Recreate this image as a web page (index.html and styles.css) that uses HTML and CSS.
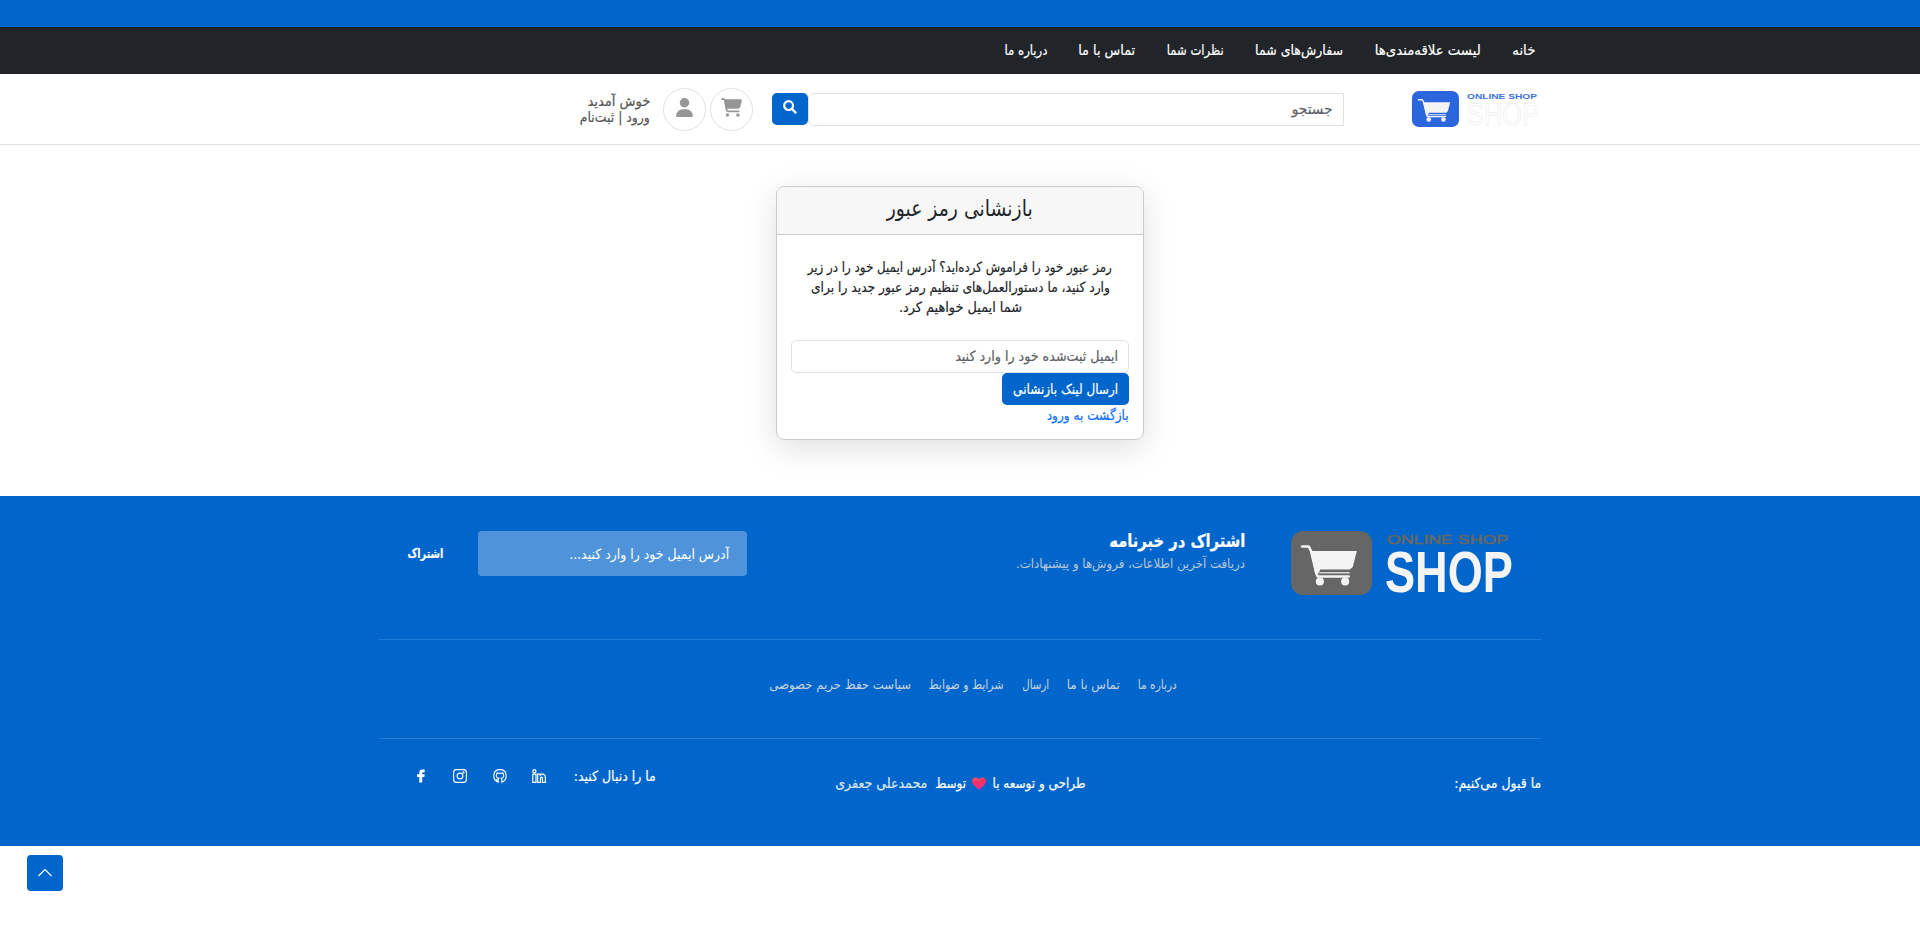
FILE: index.html
```html
<!DOCTYPE html>
<html lang="fa" dir="rtl">
<head>
<meta charset="utf-8">
<title>بازنشانی رمز عبور</title>
<link rel="stylesheet" href="styles.css">
</head>
<body>
<svg class="defs" width="0" height="0" aria-hidden="true">
  <symbol id="logo-cart" viewBox="0 0 80 64">
    <rect width="80" height="64" rx="12" fill="currentColor"/>
    <path d="M11 15.500h6.500l2.500 5 5 22 1.500 3H57" fill="none" stroke="#f4f4f4" stroke-width="2.600" stroke-linejoin="round" stroke-linecap="round"/>
    <path d="M19 20h46l-4 16-3 2.500H29l-2 4h-3z" fill="#f4f4f4"/>
    <path d="M28 41.800h30" stroke="#f4f4f4" stroke-width="1.200"/>
    <circle cx="28.500" cy="50.500" r="4" fill="#f4f4f4"/><circle cx="53.500" cy="50.500" r="4" fill="#f4f4f4"/>
  </symbol>
</svg>
<div class="topbar"></div>
<nav class="nav">
  <div class="container nav-list">
    <a class="fit" data-width="23">خانه</a>
    <a class="fit" data-width="106">لیست علاقه‌مندی‌ها</a>
    <a class="fit" data-width="88">سفارش‌های شما</a>
    <a class="fit" data-width="57">نظرات شما</a>
    <a class="fit" data-width="57">تماس با ما</a>
    <a class="fit" data-width="43">درباره ما</a>
  </div>
</nav>
<header class="header">
  <div class="logo" dir="ltr">
    <svg class="logo-mark" viewBox="0 0 80 64" preserveAspectRatio="none"><use href="#logo-cart"/></svg>
    <svg class="logo-words" viewBox="0 0 74 38">
      <text x="1" y="7.500" class="lw-top" textLength="70" lengthAdjust="spacingAndGlyphs">ONLINE SHOP</text>
      <text x="1" y="34" class="lw-main" textLength="72" lengthAdjust="spacingAndGlyphs">SHOP</text>
    </svg>
  </div>
  <div class="search">
    <div class="search-field"><span class="fit" data-width="41">جستجو</span></div>
    <button class="search-btn" aria-label="جستجو"><svg width="14" height="14" viewBox="0 0 14 14"><circle cx="5.600" cy="5.600" r="4.400" fill="none" stroke="#fff" stroke-width="2.200"/><path d="M9 9l3.600 3.600" stroke="#fff" stroke-width="2.400" stroke-linecap="round"/></svg></button>
  </div>
  <div class="circles">
    <a class="circle"><svg width="21" height="19" viewBox="0 0 576 512"><path fill="#969696" d="M0 24C0 10.700 10.700 0 24 0h45.500c22 0 41.500 12.800 50.600 32h411c26.300 0 45.500 25 38.600 50.400l-41 152.300c-8.500 31.400-37 53.300-69.500 53.300H170.700l5.400 28.500c2.200 11.300 12.100 19.500 23.600 19.500H488c13.300 0 24 10.700 24 24s-10.700 24-24 24H199.700c-34.600 0-64.300-24.600-70.700-58.500L77.400 54.500C76.700 50.700 73.400 48 69.500 48H24C10.700 48 0 37.300 0 24zm128 440a48 48 0 1 1 96 0 48 48 0 1 1-96 0zm336-48a48 48 0 1 1 0 96 48 48 0 1 1 0-96z"/></svg></a>
    <a class="circle"><svg width="17" height="19" viewBox="0 0 448 512"><path fill="#969696" d="M224 256a128 128 0 1 0 0-256 128 128 0 1 0 0 256zm-45.700 48C79.800 304 0 383.800 0 482.300 0 498.700 13.300 512 29.700 512h388.600c16.400 0 29.700-13.300 29.700-29.700C448 383.800 368.200 304 269.700 304z"/></svg></a>
  </div>
  <div class="welcome">
    <span class="fit" data-width="63">خوش آمدید</span>
    <span class="fit" data-width="70">ورود | ثبت‌نام</span>
  </div>
</header>
<main class="main">
  <section class="card">
    <h1 class="card-head"><span class="fit" data-width="146">بازنشانی رمز عبور</span></h1>
    <div class="card-body">
      <p class="lead">
        <span class="fit" data-width="304">رمز عبور خود را فراموش کرده‌اید؟ آدرس ایمیل خود را در زیر</span>
        <span class="fit" data-width="299">وارد کنید، ما دستورالعمل‌های تنظیم رمز عبور جدید را برای</span>
        <span class="fit" data-width="123">شما ایمیل خواهیم کرد.</span>
      </p>
      <div class="email"><span class="fit" data-width="163">ایمیل ثبت‌شده خود را وارد کنید</span></div>
      <button class="submit"><span class="fit" data-width="105">ارسال لینک بازنشانی</span></button>
      <a class="back"><span class="fit" data-width="82">بازگشت به ورود</span></a>
    </div>
  </section>
</main>
<footer class="footer">
  <div class="container newsletter">
    <div class="flogo" dir="ltr">
      <svg class="flogo-mark" viewBox="0 0 80 64" preserveAspectRatio="none"><use href="#logo-cart"/></svg>
      <svg class="flogo-words" viewBox="0 0 130 64">
        <text x="2" y="13" class="fw-top" textLength="121" lengthAdjust="spacingAndGlyphs">ONLINE SHOP</text>
        <text x="0" y="60.500" class="fw-main" textLength="128" lengthAdjust="spacingAndGlyphs">SHOP</text>
      </svg>
    </div>
    <div class="news-text">
      <h2><span class="fit" data-width="136">اشتراک در خبرنامه</span></h2>
      <p><span class="fit" data-width="229">دریافت آخرین اطلاعات، فروش‌ها و پیشنهادات.</span></p>
    </div>
    <div class="news-input"><span class="fit" data-width="160">آدرس ایمیل خود را وارد کنید...</span></div>
    <button class="news-btn"><span class="fit" data-width="36">اشتراک</span></button>
  </div>
  <div class="container links">
    <a class="fit" data-width="39">درباره ما</a>
    <a class="fit" data-width="53">تماس با ما</a>
    <a class="fit" data-width="27">ارسال</a>
    <a class="fit" data-width="75">شرایط و ضوابط</a>
    <a class="fit" data-width="142">سیاست حفظ حریم خصوصی</a>
  </div>
  <div class="container bottom">
    <span class="fit accept" data-width="87">ما قبول می‌کنیم:</span>
    <div class="credit">
      <span class="fit" data-width="93">طراحی و توسعه با</span>
      <svg width="14" height="13" viewBox="0 0 14 13"><defs><linearGradient id="heart" x1="0" y1="0" x2="0.300" y2="1"><stop offset="0" stop-color="#ff5a68"/><stop offset="0.500" stop-color="#f92f60"/><stop offset="1" stop-color="#f02a90"/></linearGradient></defs><path d="M7 12.500C4 10.500 0 7.500 0 4 0 .500 4.500-.800 7 2.300 9.500-.800 14 .500 14 4c0 3.500-4 6.500-7 8.500z" fill="url(#heart)"/></svg>
      <span class="fit by" data-width="31">توسط</span>
      <span class="fit name" data-width="92">محمدعلی جعفری</span>
    </div>
    <div class="follow">
      <span class="fit" data-width="82">ما را دنبال کنید:</span>
      <svg width="14" height="14" viewBox="0 0 14 14" fill="none" stroke="#fff" stroke-width="1.200"><circle cx="2.400" cy="2.200" r="1.600"/><path d="M.800 5.200h3.200v8.200H.800zM5.700 5.200h2.700v1c1.600-1.800 5-1 5 2.200v5h-2.900V9.400c0-1.700-2-1.700-2 0v4H5.700z"/></svg>
      <svg width="14" height="14" viewBox="0 0 14 14" fill="none" stroke="#fff" stroke-width="1.100"><path d="M5.200 13.200C-1 11 -.800.600 7 .600c7.800 0 8 10.400 1.800 12.600V10.600c0-.700-.300-1.100-.600-1.400 2.500-.200 3.200-2.700 1.900-4.200l-.100-1.300c-.800 0-1.300.500-1.600.700a6 6 0 0 0-2.800 0c-.300-.200-.800-.700-1.600-.700L3.900 5c-1.300 1.500-.600 4 1.900 4.200-.300.300-.600.700-.600 1.400zM5.200 11.500c-1.200.200-1.600-.800-2.200-1.200"/></svg>
      <svg width="14" height="14" viewBox="0 0 14 14" fill="none" stroke="#fff" stroke-width="1.100"><rect x=".600" y=".600" width="12.800" height="12.800" rx="2.800"/><circle cx="7" cy="7" r="2.900"/><circle cx="10.500" cy="3.400" r=".500" fill="#fff"/></svg>
      <svg width="14" height="14" viewBox="0 0 14 14"><path d="M5.300 13.500V8H3V5.300h2.300V3.600C5.300 1.500 6.500.500 8.300.500h2.400v2.700H9.200c-.700 0-1 .300-1 .900v1.200h2.500L10.300 8H8.200v5.500z" fill="#fff"/></svg>
    </div>
  </div>
</footer>
<button class="to-top" aria-label="بالا"><svg width="16" height="16" viewBox="0 0 16 16"><path d="M1.500 11L8 4.500l6.500 6.500" fill="none" stroke="#fff" stroke-width="1.100"/></svg></button>
<script src="fit.js"></script>
</body>
</html>
```
FILE: styles.css
```css
* { box-sizing: border-box; }
body { margin: 0; background: #fff; color: #212529; font: 14px/20px "DejaVu Sans", sans-serif; }
h1, h2, p { margin: 0; font-weight: 400; }
button { border: 0; padding: 0; font: inherit; color: #fff; background: #0066cc; }
svg { display: block; overflow: visible; }
.defs { position: absolute; }
.fit { display: block; flex: none; white-space: nowrap; -webkit-text-stroke: .2px currentColor; }
.fit-inner { display: inline-block; transform-origin: right center; }
.container { width: 1162px; margin: 0 auto; }
.topbar { height: 27px; background: #0066cc; }
.nav { height: 47px; background: #212529; color: #fff; }
.nav-list { display: flex; gap: 31.400px; align-items: center; height: 46px; padding-right: 6px; }
.header { height: 71px; border-bottom: 1px solid #dee2e6; display: flex; align-items: flex-start; padding-right: 380px; }
.logo { display: flex; gap: 7px; margin-top: 17px; width: 128px; color: #2b66dd; }
.logo-mark { width: 47px; height: 36px; }
.logo-words { width: 74px; height: 38px; }
.lw-top { font: 700 8px "Liberation Sans", sans-serif; fill: #3b72e0; }
.lw-main { font: 400 31px "Liberation Sans Narrow", "Liberation Sans", sans-serif; fill: #fff; stroke: #f1f1f1; stroke-width: .9; }
.search { display: flex; margin: 19px 68px 0 0; }
.search-field { width: 536px; height: 33px; border: 1px solid #dee2e6; border-radius: 6px 0 0 6px; padding: 5px 10px; color: #5c6166; }
.search-btn { width: 36px; height: 32px; border-radius: 5px; display: flex; justify-content: center; padding-top: 7px; }
.circles { display: flex; gap: 4px; margin: 14px 19px 0 0; }
.circle { width: 43px; height: 43px; border: 1px solid #dee2e6; border-radius: 50%; display: flex; justify-content: center; padding-top: 9px; }
.welcome { margin: 19px 13px 0 0; line-height: 16px; color: #555; }
.main { height: 351px; padding-top: 41px; }
.card { width: 368px; height: 254px; margin: 0 auto; border: 1px solid #c9cbcd; border-radius: 8px; overflow: hidden; box-shadow: 0 8px 32px rgba(0,0,0,.13); }
.card-head { height: 48px; border-bottom: 1px solid #c9cbcd; background: #f7f7f7; display: flex; justify-content: center; align-items: flex-start; padding-top: 7px; font-size: 22px; line-height: 30px; }
.card-head .fit { -webkit-text-stroke: 0; }
.card-body { padding: 22px 14px 0; display: flex; flex-direction: column; align-items: flex-start; }
.lead { align-self: stretch; display: flex; flex-direction: column; align-items: center; margin-bottom: 23px; }
.email { align-self: stretch; height: 33px; border: 1px solid #dee2e6; border-radius: 5px; padding: 5px 10px; color: #5c6166; }
.submit { height: 32px; padding: 0 11px; border-radius: 5px; }
.back { color: #0d6efd; }
.footer { height: 350px; background: #0066cc; color: #fff; padding-top: 35px; }
.newsletter { height: 109px; border-bottom: 1px solid #1f7bd8; display: flex; padding-right: 28px; }
.flogo { display: flex; gap: 13px; width: 268px; padding-left: 46px; color: #666; }
.flogo-mark { width: 81px; height: 64px; flex: none; }
.flogo-words { width: 130px; height: 64px; flex: none; }
.fw-top { font: 400 13px "Liberation Sans", sans-serif; fill: #666; stroke: #666; stroke-width: .6; }
.fw-main { font: 700 58px "Liberation Sans Narrow", "Liberation Sans", sans-serif; fill: #f4f4f4; }
.news-text { width: 498px; }
.news-text h2 { font-size: 18px; font-weight: 700; line-height: 20px; }
.news-text p { color: #b9c6d3; line-height: 26px; font-size: 13px; }
.news-input { width: 269px; height: 45px; border-radius: 4px; background: #4f94db; padding: 13px 18px; }
.news-btn { height: 45px; padding-right: 35px; font-weight: 700; font-size: 13px; }
.links { display: flex; padding: 35px 364px 0 0; gap: 18px; height: 99px; border-bottom: 1px solid #2b7cd0; color: #c8d3de; font-size: 13px; }
.links .fit, .news-text p .fit, .news-input .fit { -webkit-text-stroke: 0; }
.bottom { display: flex; padding-top: 34px; }
.credit { display: flex; align-items: center; height: 20px; margin-right: 369px; }
.credit svg { margin: 0 6px; }
.credit .name { margin-right: 8px; color: #dbe5f0; }
.follow { display: flex; align-items: center; height: 20px; margin: -7px 179px 0 0; }
.follow .fit { margin-left: 28px; }
.follow svg + svg { margin-right: 25.500px; }
.to-top { position: fixed; left: 27px; top: 855px; width: 36px; height: 36px; border-radius: 4px; display: flex; align-items: center; justify-content: center; }
```
FILE: fit.js
```js
// Keeps every label at its designed width whatever Persian font is available.
document.querySelectorAll('.fit').forEach(function (el) {
  var inner = document.createElement('span');
  inner.className = 'fit-inner';
  inner.textContent = el.textContent;
  el.textContent = '';
  el.appendChild(inner);
  var target = Number(el.dataset.width);
  var natural = inner.getBoundingClientRect().width;
  el.style.width = target + 'px';
  inner.style.transform = 'scaleX(' + target / natural + ')';
});
```
